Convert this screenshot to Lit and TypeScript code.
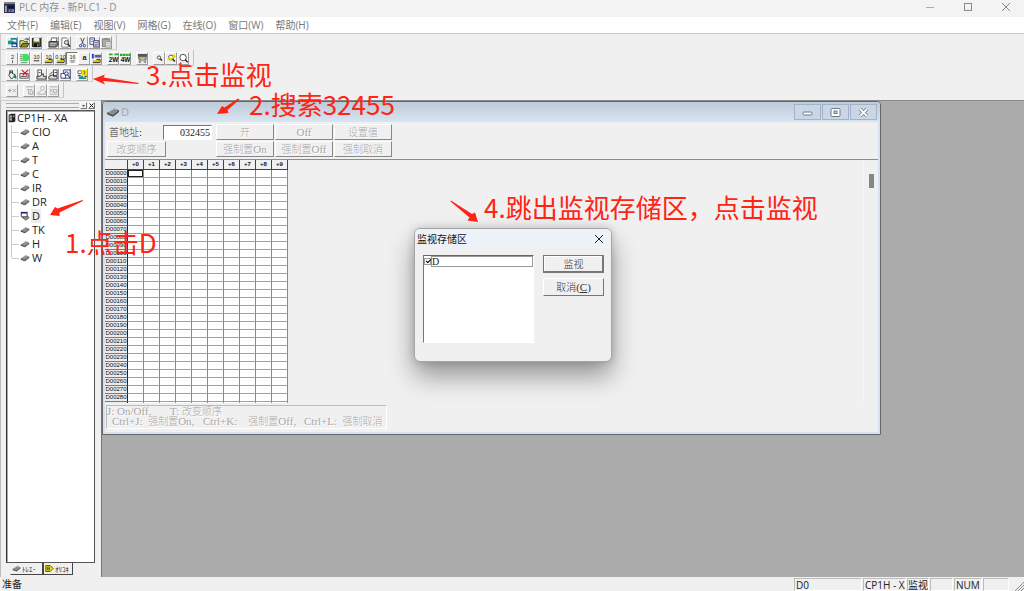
import { LitElement, html, svg, css } from "lit";
import { customElement, property } from "lit/decorators.js";
import { classMap } from "lit/directives/class-map.js";

const digits = (label: string, extra: unknown = "") => svg`
  <text x="6" y="6" text-anchor="middle" font-family="Liberation Sans" font-size="6" fill="#222">${label}</text>${extra}`;
const yellowBar = svg`<path d="M2 8h3l1-1h3v3H2z" fill="#d8c800"/><path d="M2 10.500h8M6 7h4v3" stroke="#222" fill="none"/>`;
const lens = (r: number) => svg`<circle cx="5.500" cy="5" r="${r}" fill="#fff" stroke="#444"/><path d="M${5.5 + r * 0.7} ${5 + r * 0.7}L${7 + r} ${6.5 + r}" stroke="#222" stroke-width="1.500"/>`;
const floppy = svg`<path d="M1.500 1.500h9v9h-9z" fill="#6b6b20" stroke="#111"/><path d="M3 1h6v4H3z" fill="#eee"/><path d="M3 7h6v4H3z" fill="#111"/><path d="M7 8h1v2H7z" fill="#fff"/>`;
const sheet = svg`<path d="M2 1h5l2 2v8H2z" fill="#fff" stroke="#555" stroke-width=".8"/>`;

const ICONS: Record<string, unknown> = {
  connect: svg`<path d="M4 1h7v5H4z" fill="#1f8a96"/><path d="M5 3h5v2H5z" fill="#fff"/><path d="M1 4h6v4H1z" fill="#159a9a"/><path d="M5 6h6v5H5z" fill="#173c8a"/><path d="M6 8h4v2H6z" fill="#fff"/>`,
  open: svg`<path d="M1 4h4l1 1h3v2H4l-2 4H1z" fill="#e3dc6a" stroke="#222" stroke-width=".8"/><path d="M4 7h7l-2 4H2z" fill="#8f8820" stroke="#222" stroke-width=".8"/><path d="M6 3q2-3 4 0m0-2v2H8" fill="none" stroke="#222" stroke-width=".8"/>`,
  save: floppy,
  print: svg`<path d="M4 1h6L9 5H3z" fill="#fff" stroke="#333" stroke-width=".8"/><path d="M1 5h10v4l-2 2H1z" fill="#777" stroke="#222" stroke-width=".8"/><path d="M2 7h7M2 9h6" stroke="#ddd" stroke-width=".8"/>`,
  preview: svg`${sheet}<circle cx="7" cy="6" r="2.200" fill="#ddd" stroke="#222" stroke-width=".8"/><path d="M8.500 7.500l2.500 3" stroke="#222" stroke-width="1.500"/>`,
  cut: svg`<path d="M4 1l3 7M8 1L5 8" stroke="#444" fill="none"/><circle cx="4" cy="9.500" r="1.300" fill="none" stroke="#26349b"/><circle cx="8" cy="9.500" r="1.300" fill="none" stroke="#26349b"/>`,
  copy: svg`<path d="M1 1h5v7H1z" fill="#fff" stroke="#26306b" stroke-width=".9"/><path d="M2 3h3M2 5h3" stroke="#555" stroke-width=".7"/><path d="M5 4h6v7H5z" fill="#dfe3f5" stroke="#26306b" stroke-width=".9"/><path d="M6 6h4M6 8h4M6 9.500h3" stroke="#444" stroke-width=".7"/>`,
  paste: svg`<path d="M1.500 2h8v8.500h-8z" fill="#aaa" stroke="#777"/><path d="M4 1h3v2H4z" fill="#888"/><path d="M5 5h6v6H5z" fill="#eee" stroke="#888" stroke-width=".8"/><path d="M6 7h4M6 9h4" stroke="#999" stroke-width=".7"/>`,
  binary: digits("2", svg`<path d="M6 8v3" stroke="#444" stroke-width=".9"/>`),
  bcd: svg`<path d="M4 1h5l2 2v4L9 9H4z" fill="#3ee05c"/><path d="M1 2h3M1 4h3M1 6h3M1 8h3M2 10.500h7" stroke="#4f8a5c" stroke-width=".9"/>`,
  decimal: digits("10", svg`<path d="M3 8.500h6" stroke="#222"/>`),
  signed: digits("10", yellowBar),
  floating: digits("0.10", yellowBar),
  hex: digits("16", svg`<path d="M3 8.500h6M4 10h4" stroke="#555" stroke-width=".8"/>`),
  text: svg`<text x="6" y="8" text-anchor="middle" font-family="Liberation Sans" font-weight="bold" font-size="8" fill="#222">a</text>`,
  longfloat: svg`<path d="M1 1h2v5H1z" fill="#2438d2"/><path d="M4 2h7v3H4z" fill="#5a5a9e"/>${yellowBar}`,
  two: svg`<path d="M1 1.500h10" stroke="#19b32c" stroke-width="2" stroke-dasharray="4 2"/><text x="6" y="10" text-anchor="middle" font-family="Liberation Sans" font-weight="bold" font-size="7" fill="#111">2W</text>`,
  four: svg`<path d="M0 2h12" stroke="#19b32c" stroke-width="2.500" stroke-dasharray="2.500 .5"/><text x="6" y="10" text-anchor="middle" font-family="Liberation Sans" font-weight="bold" font-size="7" fill="#111">4W</text>`,
  monitor: svg`<path d="M1 1h10v3H1z" fill="#555"/><path d="M2 4h8v3H2z" fill="#bbb" stroke="#444" stroke-width=".8"/><path d="M4 6h4v2H4z" fill="#d8c800"/><path d="M2 8h8v3H2z" fill="#888"/><path d="M4 9h4v2H4z" fill="#eee"/>`,
  zoomout: lens(1.8),
  zoomfit: svg`${lens(2.7)}<path d="M1 8l3-5 1 3 4-5 2 3-4 2-1 3-2-2z" fill="#e7d900"/>`,
  zoomin: lens(3.5),
  fill: svg`<path d="M4 3l5 4-4 4-3-4z" fill="#eee" stroke="#222" stroke-width=".9"/><path d="M3 5V2h3v3" fill="none" stroke="#222" stroke-width=".9"/><path d="M8 5q3 2 2 6L7 9z" fill="#178080"/>`,
  clear: svg`<path d="M1 5h9v5H1z" fill="#fff" stroke="#333" stroke-width=".9"/><path d="M3 1l6 6M10 1L4 7" stroke="#c3202e" stroke-width="1.400"/><path d="M2 8h7" stroke="#333"/>`,
  download: svg`<path d="M2 1h4v7H2z" fill="#fff" stroke="#333" stroke-width=".9"/><path d="M1 8h3l4-3v3h3v3H1z" fill="#ddd" stroke="#222" stroke-width=".9"/><path d="M3 4h2" stroke="#333"/>`,
  upload: svg`<path d="M6 1h4v6H6z" fill="#fff" stroke="#333" stroke-width=".9"/><path d="M1 8l5-2v2h4v3H1z" fill="#ddd" stroke="#222" stroke-width=".9"/><path d="M7 4h3M5 3L2 6" stroke="#333"/>`,
  compare: svg`<path d="M4 1h7v9H4z" fill="#fff" stroke="#283070" stroke-width=".9"/><path d="M1 5h5v5H1z" fill="#fff" stroke="#283070" stroke-width=".9"/><circle cx="7" cy="5" r="2" fill="#dce7ff" stroke="#283070"/><path d="M8 6l3 4" stroke="#222"/>`,
  watch: svg`<path d="M1 2h4v3H1z" fill="#fff" stroke="#444" stroke-width=".8"/><path d="M5 1h6v6H5z" fill="#f0e400"/><path d="M7 2q3 1 1 3v1" fill="none" stroke="#555"/><path d="M2 8h2l2-1 1 2h3v2H2z" fill="#2a8f83"/><path d="M1 7h3M8 8h3" stroke="#333"/>`,
  set: svg`<path d="M1 6h4M3 4v4" stroke="#999"/><path d="M6 4l4 4M10 4L6 8" stroke="#aaa"/>`,
  forceon: svg`<path d="M2 2h8M3 5h6M5 5v5h5V6" fill="none" stroke="#aaa"/><circle cx="8" cy="8" r="1.500" fill="#fff" stroke="#999" stroke-width=".8"/>`,
  forceoff: svg`<circle cx="7" cy="3.500" r="2" fill="#fff" stroke="#aaa"/><path d="M6 6L2 9v1h8V6" fill="none" stroke="#aaa"/>`,
  forcecancel: svg`<path d="M2 2h8M2 10h8" stroke="#aaa"/><path d="M2 4l3 4M5 4L2 8M6 5h4v3H6z" fill="none" stroke="#aaa"/>`,
  chip: svg`<path d="M1 7l6-4 4 2-5 4z" fill="#8d8d8d" stroke="#444" stroke-width=".7"/><path d="M1 7v1l5 2 5-4V5L6 9z" fill="#444"/><path d="M2 6l5-3 2 1" stroke="#ddd" stroke-width=".8" fill="none"/>`,
  chipopen: svg`<path d="M3 8l5-3 3 3-4 3z" fill="#999" stroke="#333" stroke-width=".8"/><path d="M1.500 2h7v5h-7z" fill="#fff" stroke="#222"/><path d="M1 1h8v2H1z" fill="#252b7d"/>`,
  plc: svg`<path d="M2 2l3-1h5v9l-2 1H2z" fill="#222"/><path d="M3 3h3v6H3z" fill="#ccc"/><path d="M3 5h3M3 7h3" stroke="#222" stroke-width=".8"/><path d="M7 3h2v2H7z" fill="#4b8"/>`,
  tag: svg`<path d="M1 2h6l4 4-4 4H1z" fill="#eee000" stroke="#333"/><path d="M3 4h3v4H3zM3 6h3" fill="none" stroke="#333" stroke-width=".8"/>`,
  app: svg`<path d="M0 0h12v12H0z" fill="#2b2f52"/><path d="M0 0h12v2H0z" fill="#888"/><path d="M1 4h2v7H1z" fill="#aaa"/><path d="M4 4h7v3H4z" fill="#11153a"/><path d="M5 8h2v3H5zM8 8h3v3H8z" fill="#7c83b5"/>`,
};

const icon = (name: string) => html`<svg class="icon" viewBox="0 0 12 12" aria-hidden="true">${ICONS[name]}</svg>`;

// Chinese runs get their own size next to the serif Latin ones.
const mixed = (s: string) =>
  s.split(/([\u4e00-\u9fff]+)/).map((p) => (/[\u4e00-\u9fff]/.test(p) ? html`<span class="han">${p}</span>` : p));

const shared = css`
  * { box-sizing: border-box; }
  button { font: inherit; color: inherit; padding: 0; margin: 0; border: 0; background: none; }
  .icon { display: block; width: 12px; height: 12px; flex: none; }
  .song { font-family: "Liberation Serif", "Noto Sans CJK SC", serif; font-size: 11px; white-space: pre; }
  .han { font-size: 10px; font-family: "Noto Sans CJK SC", sans-serif; font-weight: 300; }
`;

@customElement("tool-strip")
class ToolStrip extends LitElement {
  @property({ attribute: false }) groups: string[][] = [];
  @property() pressed = "";
  @property({ type: Boolean }) inactive = false;
  static styles = [shared, css`
    :host { display: flex; align-self: flex-start; gap: 5px; padding: 2px 4px 0 5px; border-right: 1px solid #c4c4c4; border-bottom: 1px solid #d2d2d2; }
    .group { display: flex; }
    .tool { width: 12px; height: 13px; border: 1px solid; border-color: #fff #9c9c9c #9c9c9c #fff; display: grid; place-items: center; }
    .tool.down { border-color: #777 #fff #fff #777; background: #fafafa; }
    .tool .icon { width: 11px; height: 11px; }
  `];
  render() {
    return this.groups.map((g) => html`<div class="group">${g.map((n) => html`
      <button class=${classMap({ tool: true, down: n === this.pressed })} aria-label=${n} ?disabled=${this.inactive}>${icon(n)}</button>`)}</div>`);
  }
}

@customElement("area-tree")
class AreaTree extends LitElement {
  static styles = [shared, css`
    :host { display: flex; flex-direction: column; width: 101px; flex: none; padding: 0 6px 2px 5px; border-left: 1px solid #bbb; border-top: 1px solid #ccc; background: #f0f0f0; }
    .grip { height: 9px; display: flex; align-items: center; gap: 1px; }
    .lines { flex: 1; height: 5px; border-top: 1px solid #aaa; border-bottom: 1px solid #aaa; }
    .mini { width: 7px; height: 7px; border: 1px solid; border-color: #fff #777 #777 #fff; display: grid; place-items: center; }
    .mini svg { width: 5px; height: 5px; }
    .box { flex: 1; background: #fff; border: 1px solid #555; border-left-color: #333; box-shadow: inset 1px 1px #aaa; font: 11px/14px "Open Sans", sans-serif; color: #222; min-height: 0; overflow: hidden; }
    .root { display: flex; align-items: center; }
    .root .icon { width: 10px; height: 10px; }
    ul { list-style: none; margin: 0; padding: 0 0 0 4px; }
    li { display: flex; align-items: center; gap: 1px; height: 14px; border-left: 1px solid #ccc; }
    li:last-child { border-image: linear-gradient(#ccc 50%, transparent 50%) 1; }
    li::before { content: ""; width: 7px; border-top: 1px solid #ccc; }
    li .icon { width: 10px; height: 10px; }
    .name { padding: 0 1px; }
    .on { background: #ececec; }
    .tabs { display: flex; align-items: flex-start; padding-left: 4px; font: 7px/10px "Noto Sans CJK JP", sans-serif; color: #222; }
    .tab { display: flex; align-items: center; gap: 1px; height: 12px; border: 1px solid #444; border-top: 0; padding: 0 3px 0 1px; white-space: nowrap; }
    .tab.front { width: 33px; border-color: transparent #444 #444 transparent; }
    .tab.back { width: 30px; }
    .tab .icon { width: 9px; height: 9px; }
  `];
  render() {
    return html`
      <div class="grip"><div class="lines"></div>
        <button class="mini" aria-label="Dock"><svg viewBox="0 0 5 5"><path d="M1 2h3L2.500 4z" fill="#555"/></svg></button>
        <button class="mini" aria-label="Close"><svg viewBox="0 0 5 5"><path d="M.5.5l4 4M4.500.5l-4 4" stroke="#222"/></svg></button></div>
      <div class="box"><div class="root">${icon("plc")}CP1H - XA</div>
        <ul>${["CIO", "A", "T", "C", "IR", "DR", "D", "TK", "H", "W"].map((n) => html`
          <li>${icon(n === "D" ? "chipopen" : "chip")}<span class=${classMap({ name: true, on: n === "D" })}>${n}</span></li>`)}</ul></div>
      <div class="tabs"><button class="tab front">${icon("chip")}ﾄﾚｴ･</button><button class="tab back">${icon("tag")}ｵﾘｺｷ</button></div>`;
  }
}

@customElement("memory-window")
class MemoryWindow extends LitElement {
  static styles = [shared, css`
    :host { display: flex; flex-direction: column; background: #f0f0f0; border: 1px solid #666; border-radius: 4px 4px 0 0; box-shadow: inset 0 0 0 2px #d7e2ee; padding: 0 2px 3px; }
    .title { display: flex; align-items: center; gap: 1px; height: 20px; margin: 0 -2px; padding: 0 3px; background: linear-gradient(#bdcbd9, #d7e4f2); border-radius: 3px 3px 0 0; font: 11px/16px "Open Sans", sans-serif; color: #9aa8b8; flex: none; }
    .title .icon { width: 14px; height: 14px; }
    .title .name { flex: 1; }
    .cap { width: 27px; height: 16px; border: 1px solid #a3b4ca; background: #c8d6e6; display: grid; place-items: center; }
    .cap svg { width: 11px; height: 9px; display: block; }
    .controls { display: flex; height: 38px; padding: 2px 2px 0; border-bottom: 1px solid #8d8d8d; flex: none; }
    .left { width: 109px; display: flex; flex-direction: column; gap: 1px; }
    .field { display: flex; align-items: center; height: 16px; padding-left: 2px; color: #333; }
    .field label { flex: 1; }
    .field input { width: 49px; height: 15px; margin-right: 4px; border: 1px solid; border-color: #777 #fff #fff #777; padding: 0 1px; background: #fff; text-align: right; font: 10px "Liberation Serif", serif; color: #222; border-radius: 0; outline: 0; }
    .keys { display: grid; grid-template-columns: repeat(3, 58px); gap: 1px; align-content: start; }
    .key { height: 16px; border: 1px solid; border-color: #fff #888 #888 #fff; color: #a6a6a6; line-height: 13px; text-shadow: 1px 1px #fff; }
    .left .key { width: 59px; }
    .body { flex: 1; min-height: 0; display: flex; justify-content: space-between; overflow: hidden; }
    .clip { overflow: hidden; }
    table { border-collapse: separate; border-spacing: 0; table-layout: fixed; width: 183px; font: 6px/7px "Liberation Sans", sans-serif; color: #111; }
    th, td { padding: 0; height: 8px; border-right: 1px solid #888; border-bottom: 1px solid #a0a0a0; text-align: center; font-weight: normal; overflow: hidden; }
    td { background: #fff; }
    thead th { height: 10px; line-height: 9px; font-weight: bold; border-right-color: #444; border-bottom-color: #444; }
    thead th:first-child, .addr { width: 23px; }
    .addr { border-right-color: #222; border-bottom-color: #777; background: #ececec; }
    .cur { box-shadow: inset 0 0 0 1px #222; }
    .track { width: 15px; padding: 14px 4px 0 5px; border-left: 1px solid #f5f5f5; }
    .thumb { height: 14px; background: #868686; }
    .hint { margin: 2px 0 2px 1px; width: 281px; height: 24px; border: 1px solid; border-color: #bbb #fff #fff #bbb; color: #a9a9a9; line-height: 10px; flex: none; text-shadow: 1px 1px #fff; }
    .line { display: grid; grid-template-columns: 63px 1fr; height: 10px; }
    .line.ctrl { grid-template-columns: 91px 101px 1fr; padding-left: 5px; }
  `];
  render() {
    const addr = (i: number) => "D" + String(i * 10).padStart(5, "0");
    return html`
      <div class="title">${icon("chip")}<span class="name">D</span>
        <button class="cap" aria-label="Minimize"><svg viewBox="0 0 11 9"><rect x="1" y="4" width="9" height="3" rx="1" fill="#fff" stroke="#707b88"/></svg></button>
        <button class="cap" aria-label="Maximize"><svg viewBox="0 0 11 9"><rect x="1" y=".5" width="9" height="8" rx="1" fill="#fff" stroke="#707b88"/><rect x="4" y="3" width="3" height="2.500" fill="#c8d6e6" stroke="#707b88"/></svg></button>
        <button class="cap" aria-label="Close"><svg viewBox="0 0 11 9"><path d="M2 1l7 7M9 1L2 8" stroke="#707b88" stroke-width="3.500"/><path d="M2 1l7 7M9 1L2 8" stroke="#fff" stroke-width="1.800"/></svg></button>
      </div>
      <div class="controls song"><div class="left"><div class="field"><label for="addr">${mixed("首地址:")}</label><input id="addr" value="032455"></div>
        <button class="key" disabled>${mixed("改变顺序")}</button></div>
        <div class="keys">${["开", "Off", "设置值", "强制置On", "强制置Off", "强制取消"].map((k) => html`<button class="key" disabled>${mixed(k)}</button>`)}</div></div>
      <div class="body"><div class="clip"><table>
        <thead><tr><th></th>${Array.from({ length: 10 }, (_, i) => html`<th>+${i}</th>`)}</tr></thead>
        <tbody>${Array.from({ length: 30 }, (_, r) => html`<tr><th class="addr">${addr(r)}</th>${Array.from({ length: 10 }, (_, c) => html`<td class=${classMap({ cur: r + c === 0 })}></td>`)}</tr>`)}</tbody>
      </table></div><div class="track"><div class="thumb"></div></div></div>
      <div class="hint song"><div class="line"><span>J: On/Off,</span><span>${mixed("T: 改变顺序")}</span></div><div class="line ctrl">${["Ctrl+J:  强制置On,", "Ctrl+K:    强制置Off,", "Ctrl+L:  强制取消"].map((t) => html`<span>${mixed(t)}</span>`)}</div></div>`;
  }
}

@customElement("monitor-dialog")
class MonitorDialog extends LitElement {
  static styles = [shared, css`
    :host { display: block; background: #f0f0f0; border: 1px solid #a5a5a5; border-radius: 6px; overflow: hidden; box-shadow: 0 14px 26px rgba(0,0,0,.38), 0 0 8px rgba(0,0,0,.16); }
    .bar { display: flex; align-items: center; justify-content: space-between; height: 19px; padding: 0 7px 0 2px; background: #edf2f9; font: 10px/18px "Noto Sans CJK SC", sans-serif; color: #111; }
    .x svg { width: 10px; height: 10px; display: block; }
    .content { display: flex; gap: 9px; padding: 7px 7px 0 8px; }
    .list { width: 111px; height: 88px; background: #fff; border: 1px solid; border-color: #666 #fff #fff #777; }
    .item { display: flex; align-items: center; height: 11px; color: #222; }
    .item input { appearance: none; width: 7px; height: 7px; margin: 0; border: 1px solid #999; background: #fff; position: relative; flex: none; }
    .item input:checked::after { content: ""; position: absolute; left: 1px; top: 0; width: 4px; height: 2px; border: solid #000; border-width: 0 0 1px 1px; transform: rotate(-45deg); }
    .item label { flex: 1; border: 1px solid #999; height: 11px; line-height: 9px; font-size: 10px; }
    .acts { flex: 1; display: flex; flex-direction: column; gap: 5px; }
    .act { height: 18px; line-height: 15px; border: 1px solid; border-color: #fff #777 #777 #fff; color: #333; }
    .act.def { border: 1px solid #777; box-shadow: inset -1px -1px #777, inset 1px 1px #fff; }
  `];
  render() {
    return html`<div class="bar"><span>监视存储区</span><button class="x" aria-label="Close"><svg viewBox="0 0 10 10"><path d="M1 1l8 8M9 1L1 9" stroke="#222"/></svg></button></div>
      <div class="content song"><div class="list"><div class="item"><input id="d" type="checkbox" checked><label for="d">D</label></div></div><div class="acts"><button class="act def">${mixed("监视")}</button><button class="act">${mixed("取消(")}<u>C</u>)</button></div></div>`;
  }
}

@customElement("app-root")
class AppRoot extends LitElement {
  static styles = [shared, css`
    :host { display: flex; flex-direction: column; height: 100vh; position: relative; overflow: hidden; background: #f0f0f0; font: 10px/14px "Open Sans", "Noto Sans CJK SC", sans-serif; color: #222; }
    .titlebar { display: flex; align-items: center; gap: 4px; height: 17px; padding: 0 13px 3px 4px; background: #f3f3f3; color: #8f8f8f; flex: none; }
    .titlebar .icon { width: 11px; height: 11px; }
    .titlebar .name { flex: 1; }
    .wins { display: flex; gap: 28px; }
    .wins svg { width: 10px; height: 10px; display: block; }
    .menu { display: flex; gap: 12px; height: 17px; padding: 0 7px; background: #fff; border-bottom: 1px solid #c8c8c8; color: #777; flex: none; }
    .strips { display: flex; flex-direction: column; flex: none; border-left: 1px solid #ccc; padding-bottom: 2px; }
    .work { flex: 1; display: flex; min-height: 0; }
    .mdi { flex: 1; background: #ababab; border-top: 1px solid #8a8a8a; border-left: 1px solid #777; position: relative; }
    .child { position: absolute; left: 0; top: 0; width: 779px; height: 334px; }
    .dlg { position: absolute; left: 414px; top: 228px; width: 198px; height: 134px; }
    .status { display: flex; gap: 1px; height: 14px; padding: 1px 0 0 2px; flex: none; line-height: 13px; }
    .status .msg { flex: 1; }
    .cell { border: 1px solid; border-color: #bbb #fff #fff #bbb; overflow: hidden; white-space: nowrap; padding-left: 1px; }
    .w1 { width: 68px; } .w2 { width: 43px; } .w3 { width: 22px; padding: 0; } .w4 { width: 23px; } .w5 { width: 28px; } .w6 { width: 26px; }
    .grip { width: 14px; align-self: flex-end; }
    .grip svg { display: block; margin-left: auto; width: 9px; height: 9px; }
    .notes { position: absolute; inset: 0; pointer-events: none; color: #ff2414; font: 26px/26px "Noto Sans CJK SC", sans-serif; }
    .note { position: absolute; white-space: nowrap; }
    .n1 { left: 65px; top: 229px; } .n2 { left: 249px; top: 91px; } .n3 { left: 146px; top: 61px; } .n4 { left: 484px; top: 194px; }
    .arrows { position: absolute; left: 0; top: 0; width: 500px; height: 240px; fill: #ff2414; }
  `];
  render() {
    return html`
      <div class="titlebar">${icon("app")}<span class="name">PLC 内存 - 新PLC1 - D</span>
        <div class="wins">
          <button aria-label="Minimize"><svg viewBox="0 0 10 10"><path d="M1 5.500h8" stroke="#aaa"/></svg></button>
          <button aria-label="Maximize"><svg viewBox="0 0 10 10"><rect x="1.500" y="1.500" width="7" height="7" fill="none" stroke="#888"/></svg></button>
          <button aria-label="Close"><svg viewBox="0 0 10 10"><path d="M1 1l8 8M9 1L1 9" stroke="#888"/></svg></button></div></div>
      <nav class="menu">${["文件(F)", "编辑(E)", "视图(V)", "网格(G)", "在线(O)", "窗口(W)", "帮助(H)"].map((m) => html`<button>${m}</button>`)}</nav>
      <div class="strips">
        <tool-strip .groups=${[["connect", "open", "save"], ["print", "preview"], ["cut", "copy", "paste"]]}></tool-strip>
        <tool-strip pressed="hex" .groups=${[["binary", "bcd", "decimal", "signed", "floating", "hex", "text", "longfloat"], ["two", "four"], ["monitor"], ["zoomout", "zoomfit", "zoomin"]]}></tool-strip>
        <tool-strip .groups=${[["fill", "clear"], ["download", "upload", "compare"], ["watch"]]}></tool-strip>
        <tool-strip inactive .groups=${[["set"], ["forceon", "forceoff", "forcecancel"]]}></tool-strip>
      </div>
      <div class="work"><area-tree></area-tree><div class="mdi"><memory-window class="child"></memory-window></div></div>
      <div class="status"><span class="msg">准备</span><span class="cell w1">D0</span><span class="cell w2">CP1H - XA</span><span class="cell w3">监视</span><span class="cell w4"></span><span class="cell w5">NUM</span><span class="cell w6"></span>
        <span class="grip"><svg viewBox="0 0 9 9"><path d="M0 9l9-9M3 9l6-6M6 9l3-3" stroke="#888"/></svg></span></div>
      <monitor-dialog class="dlg" role="dialog"></monitor-dialog>
      <div class="notes"><svg class="arrows" viewBox="0 0 500 240" aria-hidden="true">
          <path d="M93 79L105 74.500L103.500 77.500L139 83L138 84L103 81L105 84.500z"/>
          <path d="M217 114L222 106L224.500 107.500L238 98.500L239.500 99.500L227.500 110L228.500 113z"/>
          <path d="M50 215L55 207L57.500 208.500L82.500 200L83 201L59.500 212.500L59.500 216z"/>
          <path d="M478 222L475 212.500L472 214L451 200.500L450.500 201.500L469.500 217.500L467.500 220.500z"/></svg>
        <span class="note n1">1.点击D</span><span class="note n2">2.搜索32455</span><span class="note n3">3.点击监视</span><span class="note n4">4.跳出监视存储区，点击监视</span></div>`;
  }
}
